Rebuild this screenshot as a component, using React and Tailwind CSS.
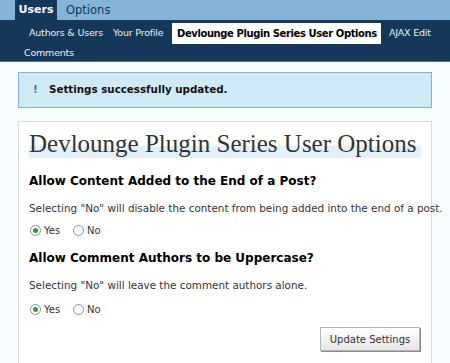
import React from "react";

const Radio = ({ checked }) => (
  <span className="inline-flex items-center justify-center w-[11px] h-[11px] rounded-full border border-[#7d93ab] bg-white">
    {checked && <span className="w-[5px] h-[5px] rounded-full bg-[#2f9a3a]"></span>}
  </span>
);

const RadioRow = ({ className }) => (
  <div className={"flex items-center h-[14px] pl-[1px] text-[10px] text-[#333] " + className}>
    <label className="flex items-center gap-[3px] w-[43px]">
      <Radio checked />
      <span>Yes</span>
    </label>
    <label className="flex items-center gap-[3px]">
      <Radio />
      <span>No</span>
    </label>
  </div>
);

const App = () => {
  return (
    <div
      className="w-[450px] h-[363px] overflow-hidden bg-[#f7fcfe]"
      style={{ fontFamily: '"DejaVu Sans", Verdana, sans-serif' }}
    >
      <div className="h-[20px] bg-[#83b4d8] flex items-end pl-[15px]">
        <div className="h-[20px] w-[42px] text-center bg-[#14375a] text-white font-bold text-[11px] leading-[20px]">
          Users
        </div>
        <div className="h-[20px] pl-[9px] text-[#14375a] text-[11.5px] leading-[20px]">
          Options
        </div>
      </div>
      <div className="bg-[#14375a] h-[42px] border-b border-[#55718c] pt-[3px] text-[9.5px] text-[#e8eff6] whitespace-nowrap">
        <div className="flex items-center h-[21px] pl-[29px]">
          <span className="w-[84px] tracking-[-0.2px]">Authors &amp; Users</span>
          <span className="w-[59px] tracking-[-0.2px]">Your Profile</span>
          <span className="w-[209px] bg-white text-black font-bold text-[10px] px-[5px] h-[21px] leading-[21px] tracking-[-0.4px]">
            Devlounge Plugin Series User Options
          </span>
          <span className="ml-[8px] tracking-[-0.2px]">AJAX Edit</span>
        </div>
        <div className="h-[17px] leading-[17px] pl-[24px] tracking-[-0.2px]">Comments</div>
      </div>
      <div className="px-[18px] pt-[10px]">
        <div className="h-[36px] bg-[#cfeaf6] border border-[#80b5d8] flex items-center pl-[14px] text-[10.3px] font-bold text-[#111]">
          <span className="w-[16px] text-[#2a6ec0]">!</span>
          <span>Settings successfully updated.</span>
        </div>
        <div className="mt-[13px] bg-white border border-[#dcdcdc] h-[300px] px-[10px] pt-[6px]">
          <h2
            className="relative h-[32px] text-[25px] leading-[32px] text-[#333] whitespace-nowrap"
            style={{ fontFamily: '"Liberation Serif", "Times New Roman", serif' }}
          >
            <span className="absolute left-0 right-0 top-[18px] h-[12px] bg-[#e2f0fc]"></span>
            <span className="relative">Devlounge Plugin Series User Options</span>
          </h2>
          <h3 className="mt-[13px] h-[16px] leading-[16px] text-[12px] font-bold text-black whitespace-nowrap">
            Allow Content Added to the End of a Post?
          </h3>
          <p className="mt-[12px] h-[14px] leading-[14px] text-[10.4px] text-[#333] whitespace-nowrap">
            Selecting "No" will disable the content from being added into the end of a post.
          </p>
          <RadioRow className="mt-[8px]" />
          <h3 className="mt-[13px] h-[16px] leading-[16px] text-[12px] font-bold text-black whitespace-nowrap">
            Allow Comment Authors to be Uppercase?
          </h3>
          <p className="mt-[12px] h-[14px] leading-[14px] text-[10.4px] text-[#333] whitespace-nowrap">
            Selecting "No" will leave the comment authors alone.
          </p>
          <RadioRow className="mt-[10px]" />
          <div className="flex justify-end mt-[11px] pr-[1px]">
            <button className="h-[24px] w-[100px] bg-gradient-to-b from-white to-[#e6e6e6] border border-[#b5b5b5] shadow-[1px_1px_0_#8a8a8a] text-[10px] text-[#333]">
              Update Settings
            </button>
          </div>
        </div>
      </div>
    </div>
  );
};

export default App;
